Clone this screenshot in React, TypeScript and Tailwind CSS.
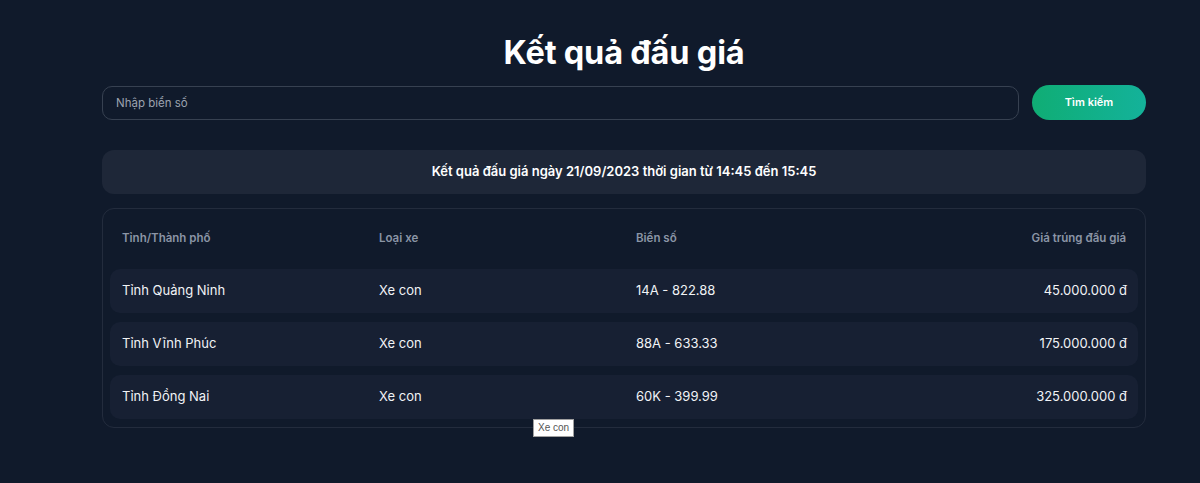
import React from 'react';

interface AuctionRow {
  province: string;
  vehicle: string;
  plate: string;
  price: string;
}

const ROWS: AuctionRow[] = [
  { province: 'Tỉnh Quảng Ninh', vehicle: 'Xe con', plate: '14A - 822.88', price: '45.000.000 đ' },
  { province: 'Tỉnh Vĩnh Phúc', vehicle: 'Xe con', plate: '88A - 633.33', price: '175.000.000 đ' },
  { province: 'Tỉnh Đồng Nai', vehicle: 'Xe con', plate: '60K - 399.99', price: '325.000.000 đ' },
];

const App: React.FC = () => {
  return (
    <div className="min-h-[483px] w-full bg-[#101a2b] pl-12 font-['Inter','Noto_Sans',sans-serif] text-white">
      <div className="relative mx-auto w-[1044px] pt-[33px]">
        {/* Tiêu đề */}
        <h1 className="text-center text-[32.5px] font-bold leading-[40px] tracking-[-0.2px]">Kết quả đấu giá</h1>

        {/* Ô tìm kiếm */}
        <div className="mt-[12px] flex items-center gap-[13px]">
          <input
            placeholder="Nhập biển số"
            className="h-[34px] flex-1 rounded-[10px] border border-[#374151] bg-transparent px-[13px] text-[11.5px] text-white outline-none placeholder:text-[#9ca3af]"
          />
          <button className="h-[35px] w-[114px] rounded-full bg-gradient-to-r from-[#10ad74] to-[#14b29a] text-[11px] font-semibold text-white">
            Tìm kiếm
          </button>
        </div>

        {/* Thông tin phiên */}
        <div className="mt-[30px] flex h-[44px] items-center justify-center rounded-[12px] bg-[#1e2738] text-[13px] font-semibold">
          Kết quả đấu giá ngày 21/09/2023 thời gian từ 14:45 đến 15:45
        </div>

        {/* Bảng kết quả */}
        <div className="mt-[14px] rounded-[12px] border border-[#232c3d] px-[7px] pb-[8px]">
          <div className="grid h-[60px] grid-cols-4 items-center text-[11.5px] font-semibold text-[#8b95a6]">
            <div className="px-[12px]">Tỉnh/Thành phố</div>
            <div className="px-[12px]">Loại xe</div>
            <div className="px-[12px]">Biển số</div>
            <div className="px-[12px] text-right">Giá trúng đấu giá</div>
          </div>
          <div className="flex flex-col gap-[9px]">
            {ROWS.map((row) => (
              <div
                key={row.plate}
                className="grid h-[44px] grid-cols-4 items-center rounded-[10px] bg-[#172033] text-[13px] text-[#f1f3f6]"
              >
                <div className="px-[12px]">{row.province}</div>
                <div className="px-[12px]">{row.vehicle}</div>
                <div className="px-[12px]">{row.plate}</div>
                <div className="px-[11px] text-right">{row.price}</div>
              </div>
            ))}
          </div>
        </div>

        {/* Tooltip */}
        <div className="absolute left-[431px] top-[419px] border border-[#a0a0a0] bg-white px-[4px] py-[1px] font-['Liberation_Sans',sans-serif] text-[10px] leading-[14px] text-[#555]">
          Xe con
        </div>
      </div>
    </div>
  );
};

export default App;
